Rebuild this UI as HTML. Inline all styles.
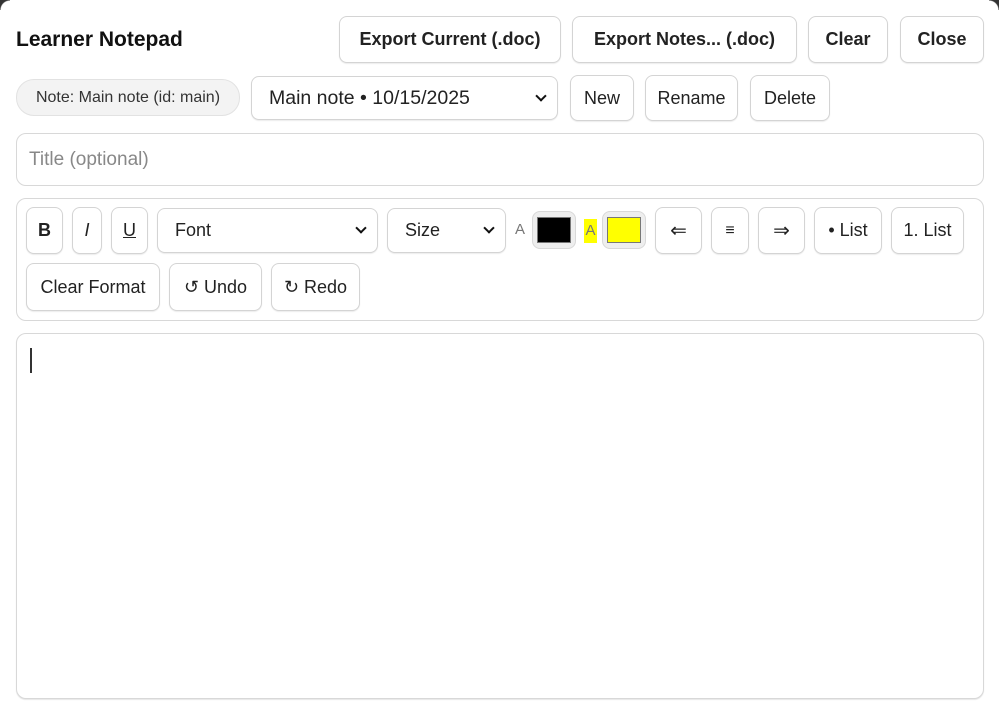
<!DOCTYPE html>
<html><head><meta charset="utf-8"><style>
*{box-sizing:border-box;margin:0;padding:0}
html,body{width:999px;height:710px;overflow:hidden;background:#fff;font-family:"Liberation Sans",sans-serif;color:#111}
.a{position:absolute}
.b{position:absolute;border:1px solid #d4d4d4;border-radius:8px;background:#fff;display:flex;align-items:center;justify-content:center;font-size:18px;color:#222;box-shadow:0 1px 1px rgba(0,0,0,.08)}
.sel{justify-content:space-between;padding:0 12px 0 17px}
.chev{width:8px;height:8px;border-right:2.5px solid #111;border-bottom:2.5px solid #111;transform:rotate(45deg);margin-top:-5px}
.box{position:absolute;border:1px solid #d8d8d8;border-radius:10px;background:#fff}
</style></head><body>
<div class="a" style="left:0;top:0;width:10px;height:10px;background:radial-gradient(circle at 10px 10px,transparent 9px,#333 10px)"></div>
<div class="a" style="right:0;top:0;width:10px;height:10px;background:radial-gradient(circle at 0 10px,transparent 9px,#333 10px)"></div>
<div class="a" style="left:16px;top:28px;font-size:21px;font-weight:bold">Learner Notepad</div>
<div class="b" style="left:339px;top:16px;width:222px;height:47px;font-weight:600">Export Current (.doc)</div>
<div class="b" style="left:572px;top:16px;width:225px;height:47px;font-weight:600">Export Notes... (.doc)</div>
<div class="b" style="left:808px;top:16px;width:80px;height:47px;font-weight:600">Clear</div>
<div class="b" style="left:900px;top:16px;width:84px;height:47px;font-weight:600">Close</div>

<div class="a" style="left:16px;top:79px;width:224px;height:37px;border:1px solid #e2e2e2;border-radius:18px;background:#f3f3f3;font-size:16px;color:#333;display:flex;align-items:center;justify-content:center">Note: Main note (id: main)</div>
<div class="b sel" style="left:251px;top:76px;width:307px;height:44px;font-size:19.5px">Main note • 10/15/2025<span class="chev"></span></div>
<div class="b" style="left:570px;top:75px;width:64px;height:46px">New</div>
<div class="b" style="left:645px;top:75px;width:93px;height:46px">Rename</div>
<div class="b" style="left:750px;top:75px;width:80px;height:46px">Delete</div>

<div class="box" style="left:16px;top:133px;width:968px;height:53px;display:flex;align-items:center;padding-left:12px;font-size:19px;color:#888">Title (optional)</div>

<div class="box" style="left:16px;top:198px;width:968px;height:123px"></div>
<div class="b" style="left:26px;top:207px;width:37px;height:47px;font-weight:bold">B</div>
<div class="b" style="left:72px;top:207px;width:30px;height:47px;font-style:italic">I</div>
<div class="b" style="left:111px;top:207px;width:37px;height:47px;text-decoration:underline">U</div>
<div class="b sel" style="left:157px;top:208px;width:221px;height:45px">Font<span class="chev"></span></div>
<div class="b sel" style="left:387px;top:208px;width:119px;height:45px">Size<span class="chev"></span></div>
<div class="a" style="left:515px;top:221px;font-size:15px;color:#777">A</div>
<div class="a" style="left:532px;top:211px;width:44px;height:38px;border-radius:8px;background:#eee;border:1px solid #d8d8d8;padding:5px 4px"><div style="width:100%;height:100%;background:#000;border:1px solid #777"></div></div>
<div class="a" style="left:584px;top:219px;width:13px;height:24px;background:#ffff00;font-size:15px;color:#777;text-align:center;line-height:24px">A</div>
<div class="a" style="left:602px;top:211px;width:44px;height:38px;border-radius:8px;background:#eee;border:1px solid #d8d8d8;padding:5px 4px"><div style="width:100%;height:100%;background:#ffff00;border:1px solid #777"></div></div>
<div class="b" style="left:655px;top:207px;width:47px;height:47px;font-size:20px">⇐</div>
<div class="b" style="left:711px;top:207px;width:38px;height:47px;font-size:16px">≡</div>
<div class="b" style="left:758px;top:207px;width:47px;height:47px;font-size:20px">⇒</div>
<div class="b" style="left:814px;top:207px;width:68px;height:47px">• List</div>
<div class="b" style="left:891px;top:207px;width:73px;height:47px">1. List</div>
<div class="b" style="left:26px;top:263px;width:134px;height:48px">Clear Format</div>
<div class="b" style="left:169px;top:263px;width:93px;height:48px">↺ Undo</div>
<div class="b" style="left:271px;top:263px;width:89px;height:48px">↻ Redo</div>

<div class="box" style="left:16px;top:333px;width:968px;height:366px;box-shadow:0 1px 1px rgba(0,0,0,.1)"></div>
<div class="a" style="left:30px;top:348px;width:2px;height:25px;background:#333"></div>
</body></html>
